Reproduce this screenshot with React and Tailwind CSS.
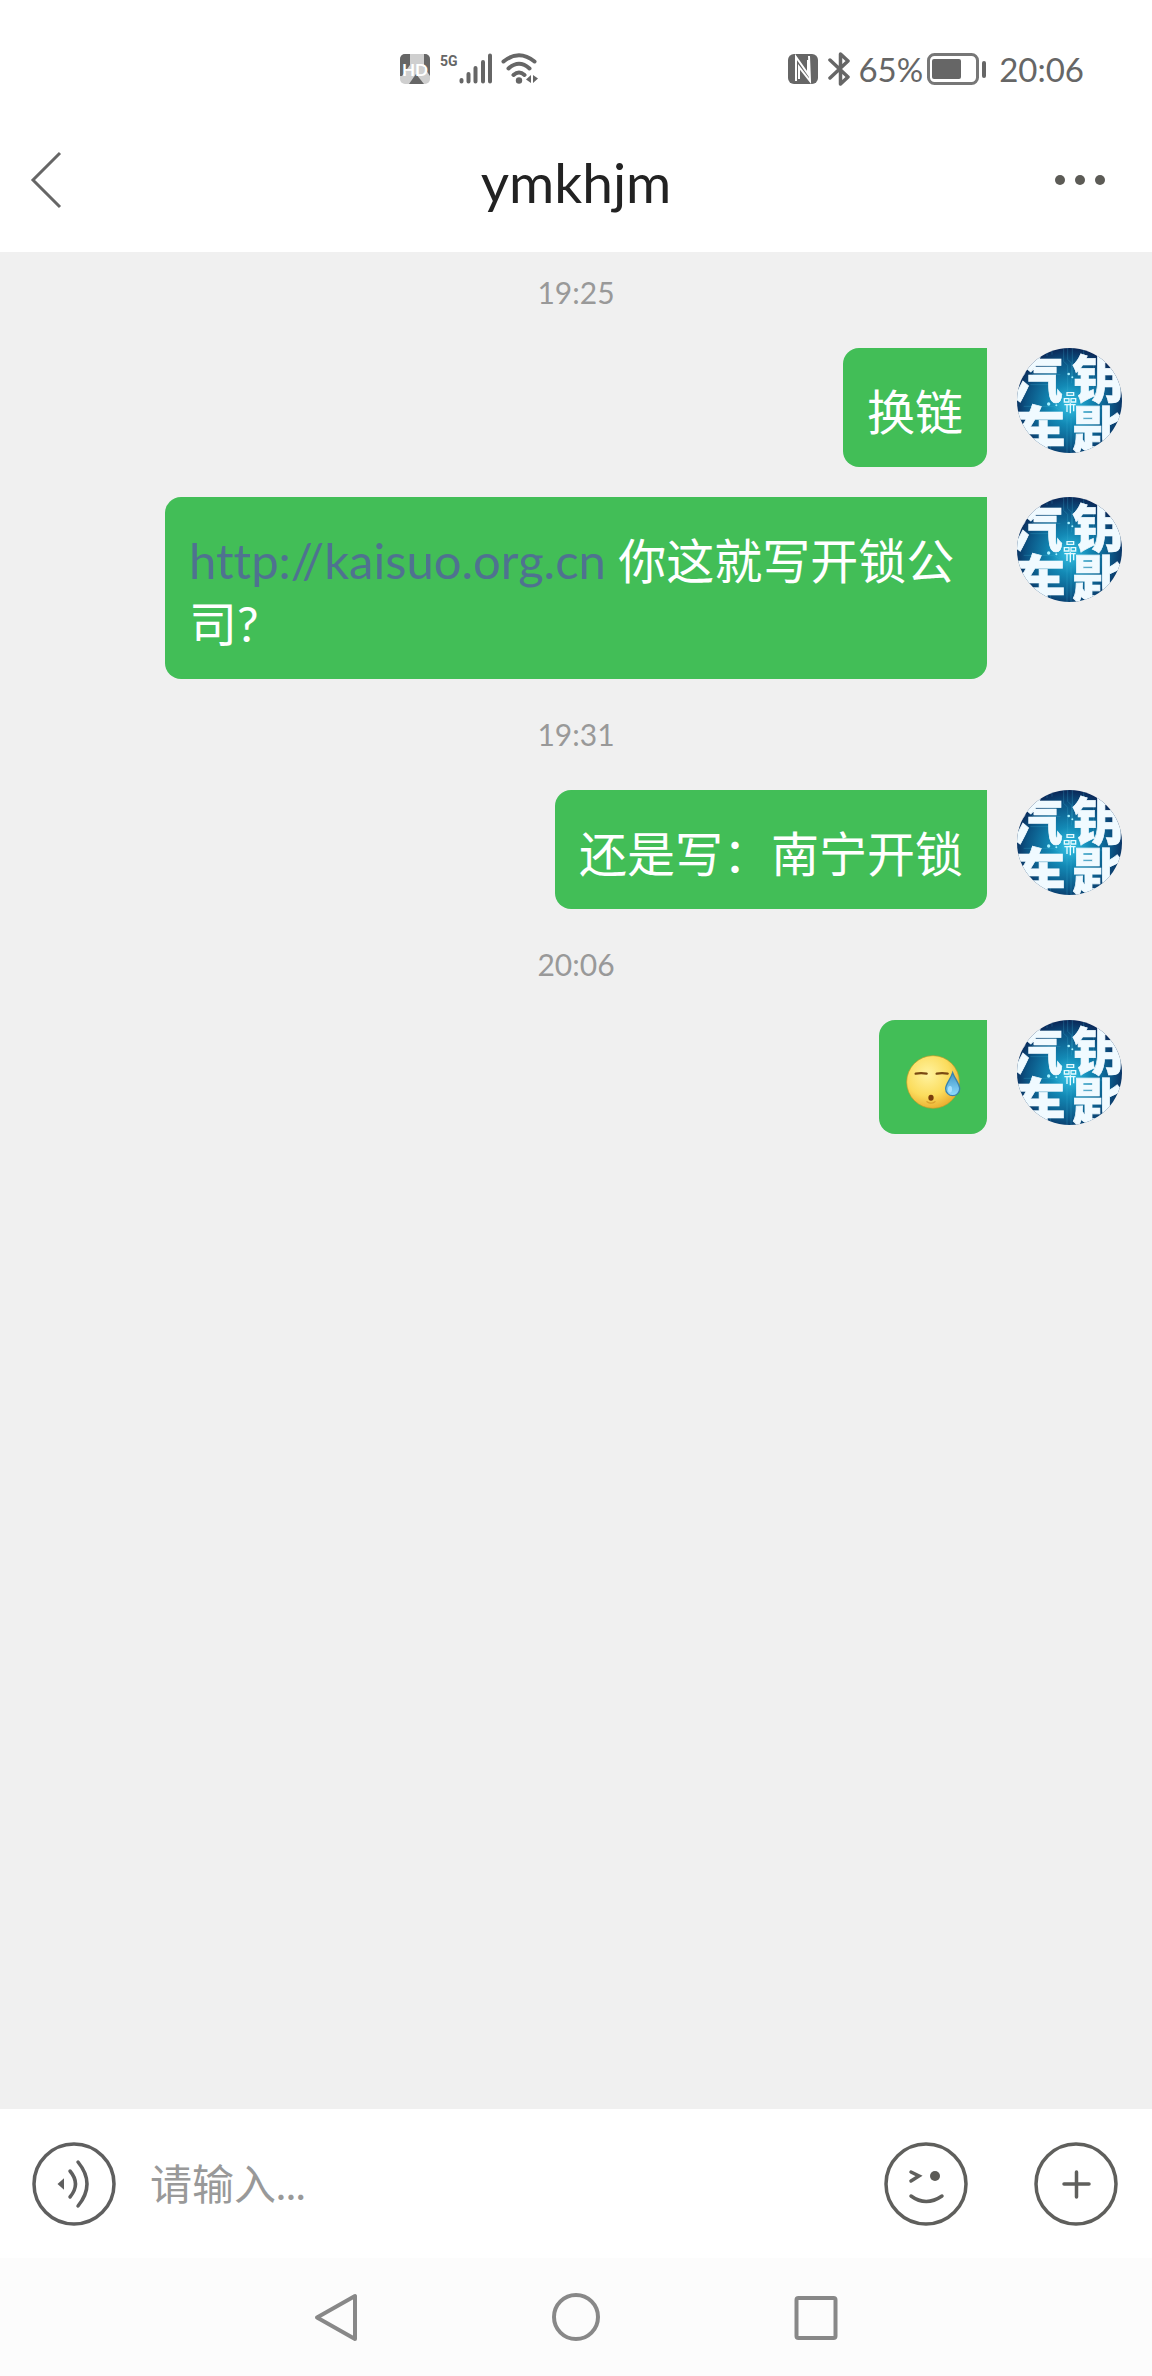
import React, { useState } from "react";

const messages = [
  { id: 1, time: "19:25", text: "换链" },
  { id: 2, link: "http://kaisuo.org.cn", text: " 你这就写开锁公司?" },
  { id: 3, time: "19:31", text: "还是写：南宁开锁" },
  { id: 4, time: "20:06", emoji: true },
];

const HdIcon = () => (
  <svg viewBox="0 0 30 30" className="h-[30px] w-[30px]">
    <rect width="30" height="30" rx="5" fill="#cfcfcf" />
    <path d="M5 0h5v11L2 22H0V5a5 5 0 0 1 5-5z" fill="#666" />
    <path d="M24 0h1a5 5 0 0 1 5 5v17l-6-9z" fill="#666" />
    <path d="M16 20l8 10H9z" fill="#666" />
    <text x="15" y="22" textAnchor="middle" fontSize="17" fontWeight="700" fill="#fff">HD</text>
  </svg>
);

const SignalIcon = () => (
  <svg viewBox="0 0 34 31" className="h-[31px] w-[34px]" stroke="#666" strokeWidth="4" strokeLinecap="round">
    <path d="M2.5 27v1.5M9.5 21v7.5M16.5 15v13.500M24 9v19.500M31 2.500v26" />
  </svg>
);

const WifiIcon = () => (
  <svg viewBox="0 0 38 31" className="h-[31px] w-[38px]" fill="none" stroke="#666" strokeWidth="4" strokeLinecap="round">
    <path d="M2.500 8.500Q18 -4 33.500 8.500M7.500 15.500Q18 6 28.500 15.500M12.500 22Q18 17 23.500 22" />
    <circle cx="18" cy="27.500" r="3.200" fill="#666" stroke="none" />
    <path d="M30 22v8l-5-3.500zM32 22l5 3.500-5 4.500z" fill="#666" stroke="none" />
  </svg>
);

const NfcIcon = () => (
  <svg viewBox="0 0 30 30" className="h-[30px] w-[30px]">
    <rect width="30" height="30" rx="6" fill="#666" />
    <path d="M8 27V3l12 17V6M21 2l1 25L11 13v12" fill="none" stroke="#fff" strokeWidth="2" />
  </svg>
);

const BluetoothIcon = () => (
  <svg viewBox="0 0 22 34" className="h-[34px] w-[22px]" fill="none" stroke="#666" strokeWidth="3.500" strokeLinejoin="round" strokeLinecap="round">
    <path d="M2 8l18 17-7.500 7V2L20 9 2 26" />
  </svg>
);

const BatteryIcon = () => (
  <svg viewBox="0 0 60 32" className="h-8 w-[60px]">
    <rect x="1.500" y="1.500" width="49" height="29" rx="6" fill="none" stroke="#777" strokeWidth="3" />
    <rect x="5" y="6" width="29" height="20" rx="2" fill="#666" />
    <rect x="55" y="8" width="4" height="17" rx="2" fill="#666" />
  </svg>
);

const StatusBar = () => (
  <div className="flex h-[107px] items-center justify-between pt-[30px] pr-[68px] pl-[400px] text-[#666]">
    <div className="flex items-center">
      <HdIcon />
      <span className="mr-px ml-[10px] self-start font-['Roboto',sans-serif] text-[14px] leading-4 font-bold">5G</span>
      <SignalIcon />
      <span className="ml-2">
        <WifiIcon />
      </span>
    </div>
    <div className="flex items-center text-[33px] leading-10">
      <NfcIcon />
      <span className="mr-2 ml-[10px]">
        <BluetoothIcon />
      </span>
      <span className="mr-1">65%</span>
      <BatteryIcon />
      <span className="ml-3">20:06</span>
    </div>
  </div>
);

const Header = ({ title }) => (
  <header className="flex h-[145px] items-center justify-between px-[30px]">
    <button aria-label="Back" className="w-[84px]">
      <svg viewBox="0 0 32 58" className="h-[58px] w-8" fill="none" stroke="#666" strokeWidth="3">
        <path d="M30 2L3 29l27 27" />
      </svg>
    </button>
    <h1 className="pt-1 text-[55px] leading-[68px] text-[#222]">{title}</h1>
    <button aria-label="More" className="flex w-[84px] justify-center gap-[10px]">
      <span className="size-[10px] rounded-full bg-[#5c5b56]" />
      <span className="size-[10px] rounded-full bg-[#5c5b56]" />
      <span className="size-[10px] rounded-full bg-[#5c5b56]" />
    </button>
  </header>
);

const Avatar = () => (
  <svg viewBox="0 0 315 315" className="size-[105px] shrink-0 rounded-full" role="img" aria-label="Avatar">
    <defs>
      <radialGradient id="glow" cx="0.5" cy="0.54" r="0.54">
        <stop offset="0" stopColor="#35c3e6" />
        <stop offset="0.35" stopColor="#1389b5" />
        <stop offset="0.75" stopColor="#0b5585" />
        <stop offset="1" stopColor="#0a2858" />
      </radialGradient>
    </defs>
    <rect width="315" height="315" fill="url(#glow)" />
    {/* circuit traces */}
    <g fill="none" stroke="#3fb4d6" strokeWidth="2" opacity="0.4">
      <path d="M140 0v40l12 12v90M152 0v34l12 12v60M166 0v90M90 0v24M105 0v20M200 0v18M30 60l20 20h80M40 110h60l20 20M20 175h90l20 12M170 180h110M150 200v115M162 210v105M40 215h60M60 250h70M180 250h60M230 30v120M100 290v20" />
    </g>
    <g
      fill="#f0faff"
      stroke="#f0faff"
      strokeWidth="2"
      fontSize="154"
      fontWeight="900"
      className="font-['Noto_Sans_CJK_SC',sans-serif]"
    >
      <text x="-18" y="151">汽</text>
      <text x="166" y="151">钥</text>
      <text x="-8" y="302">车</text>
      <text x="166" y="302">匙</text>
    </g>
    <g fill="none" stroke="#e6fbff" strokeWidth="4">
      <path d="M150 134h20v8h-20zM142 152h14v10h-14zM162 152h14v10h-14zM142 170h34M150 170v22M160 166v30M170 170v20" />
    </g>
    <g fill="#a9f1ff">
      <circle cx="95" cy="168" r="5" />
      <circle cx="155" cy="78" r="4" />
      <circle cx="166" cy="88" r="3" />
      <circle cx="118" cy="172" r="3" />
    </g>
  </svg>
);

const SweatEmoji = () => (
  <svg viewBox="0 0 180 174" className="h-[58px] w-[60px]" role="img" aria-label="Sweat">
    <defs>
      <radialGradient id="face" cx="0.4" cy="0.35" r="0.7">
        <stop offset="0" stopColor="#fff3a0" />
        <stop offset="0.6" stopColor="#fbdc5c" />
        <stop offset="1" stopColor="#e9a92c" />
      </radialGradient>
      <linearGradient id="drop" x1="0" y1="0" x2="0" y2="1">
        <stop offset="0" stopColor="#3f93c4" />
        <stop offset="1" stopColor="#8fdcff" />
      </linearGradient>
    </defs>
    <circle cx="90" cy="90" r="79" fill="url(#face)" stroke="#c99a26" strokeWidth="2" />
    <path d="M38 65q16-3 33 0M101 65q16-3 33 0" fill="none" stroke="#7a4a12" strokeWidth="7" strokeLinecap="round" />
    <ellipse cx="84" cy="137" rx="8" ry="9" fill="#7a3d0c" />
    <path d="M72 149q12 9 24 0" fill="none" stroke="#dba12e" strokeWidth="4" strokeLinecap="round" />
    <path d="M149 62c7 19 21 34 21 48a21 21 0 0 1-42 0c0-14 15-29 21-48z" fill="url(#drop)" stroke="#3a83ad" strokeWidth="4" />
    <ellipse cx="141" cy="112" rx="6" ry="10" fill="#a9e2ff" />
  </svg>
);

const Message = ({ message }) => (
  <li>
    {message.time && (
      <time className="mb-[38px] block pt-[7px] text-center text-[30px] leading-9 text-[#999]">
        {message.time}
      </time>
    )}
    <div className="flex items-start justify-end gap-[30px] pr-[30px] pl-[165px]">
      <div className="rounded-2xl rounded-tr-none bg-[#42be57] px-6 pt-8 pb-6 text-[48px] leading-[63px] text-white">
        {message.emoji ? (
          <SweatEmoji />
        ) : (
          <p>
            {message.link && (
              <a href={message.link} className="text-[49px] text-[#4f7290] [font-variant-ligatures:none]">
                {message.link}
              </a>
            )}
            {message.text}
          </p>
        )}
      </div>
      <Avatar />
    </div>
  </li>
);

const InputBar = () => {
  const [value, setValue] = useState("");

  return (
    <form
      className="flex h-[149px] items-center bg-white pr-[34px] pl-8"
      onSubmit={(e) => e.preventDefault()}
    >
      <button type="button" aria-label="Voice" className="shrink-0">
        <svg viewBox="0 0 84 84" className="size-[84px]" fill="none" stroke="#5f5f5f" strokeWidth="3.500" strokeLinecap="round">
          <circle cx="42" cy="42" r="40" />
          <path d="M27 42l4-3.500v7z" fill="#5f5f5f" strokeWidth="2" />
          <path d="M38 29q11 13 0 26M46 20q18 22 0 44" />
        </svg>
      </button>
      <input
        type="text"
        aria-label="Message"
        placeholder="请输入..."
        value={value}
        onChange={(e) => setValue(e.target.value)}
        className="ml-[34px] h-16 min-w-0 flex-1 text-[42px] leading-[64px] text-[#222] outline-none placeholder:text-[#999]"
      />
      <button type="button" aria-label="Emoji" className="shrink-0">
        <svg viewBox="0 0 84 84" className="size-[84px]" fill="none" stroke="#5f5f5c" strokeWidth="3.500" strokeLinecap="round">
          <circle cx="42" cy="42" r="40" />
          <path d="M27 30l8 4-8 5" />
          <circle cx="51" cy="34" r="5" fill="#5c5b56" stroke="none" />
          <path d="M27 54q15 11 31 0" />
        </svg>
      </button>
      <button type="button" aria-label="More actions" className="ml-[66px] shrink-0">
        <svg viewBox="0 0 84 84" className="size-[84px]" fill="none" stroke="#5f5f5c" strokeWidth="3.500" strokeLinecap="round">
          <circle cx="42" cy="42" r="40" />
          <path d="M30 42h25M42.500 30v25" />
        </svg>
      </button>
    </form>
  );
};

const NavBar = () => (
  <nav className="flex h-[118px] items-center justify-center gap-48 bg-[#fcfcfc]">
    <button aria-label="System back">
      <svg viewBox="0 0 48 48" className="size-12" fill="none" stroke="#888" strokeWidth="4" strokeLinejoin="round">
        <path d="M43 3v43L5 24.500z" />
      </svg>
    </button>
    <button aria-label="Home">
      <svg viewBox="0 0 48 48" className="size-12" fill="none" stroke="#888" strokeWidth="4">
        <circle cx="24" cy="24" r="22" />
      </svg>
    </button>
    <button aria-label="Recents">
      <svg viewBox="0 0 48 48" className="size-12" fill="none" stroke="#888" strokeWidth="4">
        <rect x="4.500" y="5" width="39" height="40" rx="2" />
      </svg>
    </button>
  </nav>
);

const App = () => {
  return (
    <div className="flex min-h-screen flex-col bg-white font-['Lato','Noto_Sans_CJK_SC',sans-serif]">
      <StatusBar />
      <Header title="ymkhjm" />

      {/* Conversation */}
      <main className="flex-1 bg-[#f0f0f0]">
        <ul className="flex flex-col gap-[30px] pt-[15px]">
          {messages.map((message) => (
            <Message key={message.id} message={message} />
          ))}
        </ul>
      </main>

      <InputBar />
      <NavBar />
    </div>
  );
};

export default App;
